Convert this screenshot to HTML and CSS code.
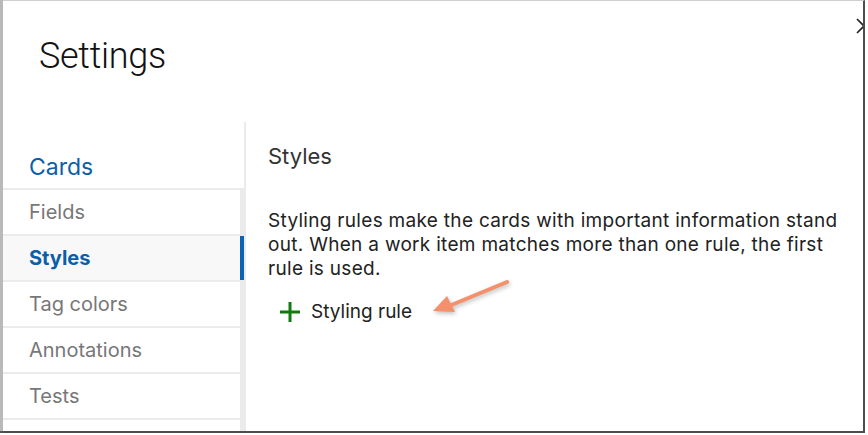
FILE: index.html
```html
<!DOCTYPE html>
<html>
<head>
    <title>Settings</title>
    <link rel="stylesheet" href="styles.css">
</head>
<body>
    <div class="screen">
        <div class="backdrop"></div>
        <div class="dialog">
            <div class="dialog-header">
                <h1>Settings</h1>
                <svg class="close-btn" width="16" height="16" viewBox="0 0 16 16">
                    <path d="M1 1 L15 15 M15 1 L1 15" stroke="#222" stroke-width="1.6" fill="none"/>
                </svg>
            </div>
            <div class="dialog-body">
                <nav class="side-nav">
                    <div class="nav-group">Cards</div>
                    <ul class="nav-list">
                        <li>Fields</li>
                        <li class="selected">Styles</li>
                        <li>Tag colors</li>
                        <li>Annotations</li>
                        <li>Tests</li>
                        <li></li>
                    </ul>
                </nav>
                <section class="content">
                    <h2>Styles</h2>
                    <p class="intro">Styling rules make the cards with important information stand out. When a work item matches more than one rule, the first rule is used.</p>
                    <button class="add-rule" type="button">
                        <svg width="20" height="20" viewBox="0 0 20 20">
                            <path d="M10 0 V20 M0 10 H20" stroke="#107c10" stroke-width="3" fill="none"/>
                        </svg>
                        Styling rule
                    </button>
                </section>
            </div>

            <!-- callout arrow drawn over the screenshot -->
            <svg class="callout" width="100" height="50" viewBox="0 0 100 50">
                <line x1="80" y1="10" x2="22" y2="34" stroke="#f4906c" stroke-width="4" stroke-linecap="round"/>
                <polygon points="6,39 20,24 28,40" fill="#f4906c"/>
            </svg>
        </div>
    </div>
</body>
</html>
```

FILE: styles.css
```css
body {
    margin: 0;
    background-color: #fff;
    font-family: Inter, "Liberation Sans", Arial, sans-serif;
}

.screen {
    display: flex;
    width: 865px;
    height: 433px;
}

.backdrop {
    width: 3px;
    background-color: #b9b9b9;
    border-bottom: 2px solid #555;
}

.dialog {
    position: relative;
    width: 860px;
    height: 430px;
    background-color: #fff;
    border-top: 1px solid #cfcfcf;
    border-right: 2px solid #4d4d4d;
    border-bottom: 2px solid #4d4d4d;
    overflow: hidden;
    display: flex;
    flex-direction: column;
}

.dialog-header {
    flex-shrink: 0;
    height: 121px;
    padding: 33px 0 0 36px;
    box-sizing: border-box;
}

.dialog-header h1 {
    margin: 0;
    font-family: Roboto, sans-serif;
    font-weight: 300;
    font-size: 36px;
    line-height: 44px;
    letter-spacing: -0.3px;
    color: #111;
}

.close-btn {
    position: absolute;
    top: 17px;
    right: -9px;
}

.dialog-body {
    flex: 1;
    min-height: 0;
    display: flex;
    overflow: hidden;
}

.side-nav {
    width: 241px;
    border-right: 2px solid #ebebeb;
    display: flex;
    flex-direction: column;
}

.nav-group {
    padding: 31px 0 7px 26px;
    font-size: 23px;
    line-height: 28px;
    color: #0b5ea8;
}

.nav-list {
    list-style: none;
    margin: 0;
    padding: 2px 0 0;
    flex: 1;
    background-color: #ebebeb;
    display: flex;
    flex-direction: column;
    gap: 2px;
}

.nav-list li {
    height: 44px;
    min-height: 44px;
    line-height: 44px;
    padding-left: 26px;
    margin-right: 4px;
    font-size: 20px;
    color: #777;
    background-color: #fff;
}

.nav-list li.selected {
    margin-right: 0;
    border-right: 4px solid #0b63b4;
    background-color: #f8f8f8;
    color: #0b5ea8;
    font-weight: bold;
}

.content {
    flex: 1;
    padding: 20px 0 0 22px;
}

.content h2 {
    margin: 0;
    font-size: 22px;
    font-weight: normal;
    line-height: 28px;
    color: #333;
}

.intro {
    width: 580px;
    margin: 39px 0 0;
    font-size: 19px;
    line-height: 24px;
    letter-spacing: 0.3px;
    color: #222;
}

.add-rule {
    display: flex;
    align-items: center;
    gap: 11px;
    margin: 19px 0 0 12px;
    padding: 0;
    border: none;
    background: none;
    font-family: inherit;
    font-size: 19px;
    line-height: 24px;
    color: #222;
}

.callout {
    position: absolute;
    left: 424px;
    top: 271px;
    filter: drop-shadow(1px 2px 2px rgba(0, 0, 0, 0.25));
}
```
